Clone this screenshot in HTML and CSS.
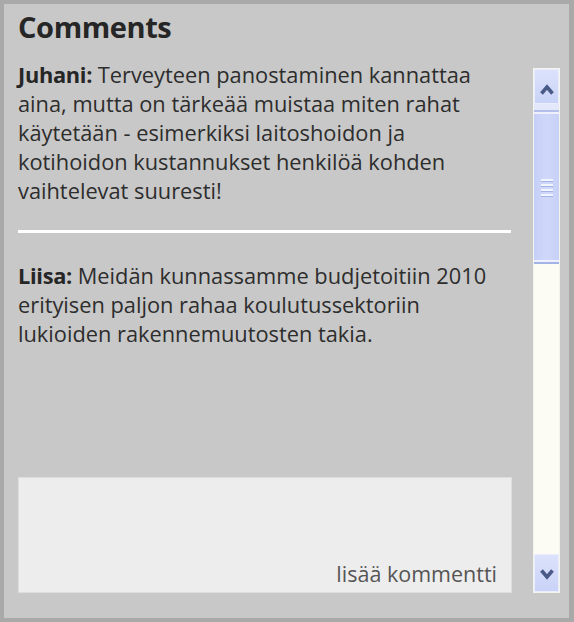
FILE: index.html
```html
<!DOCTYPE html>
<html lang="fi">
<head>
<meta charset="utf-8">
<title>Comments</title>
<link rel="stylesheet" href="styles.css">
</head>
<body>
<div class="frame">
  <h1 class="title">Comments</h1>
  <div class="row">
    <div class="content">
      <p class="comment"><b>Juhani:</b> Terveyteen panostaminen kannattaa<br>aina, mutta on tärkeää muistaa miten rahat<br>käytetään - esimerkiksi laitoshoidon ja<br>kotihoidon kustannukset henkilöä kohden<br>vaihtelevat suuresti!</p>
      <div class="sep"></div>
      <p class="comment"><b>Liisa:</b> Meidän kunnassamme budjetoitiin 2010<br>erityisen paljon rahaa koulutussektoriin<br>lukioiden rakennemuutosten takia.</p>
      <div class="box"><span class="add">lisää kommentti</span></div>
    </div>
    <div class="scrollbar">
      <div class="btn btn-up">
        <svg width="14" height="11" viewBox="0 0 14 11"><polyline points="1.5,9.5 7,3 12.5,9.5" fill="none" stroke="#4a5a86" stroke-width="3.6"/></svg>
      </div>
      <div class="gap"></div>
      <div class="thumb">
        <div class="grip"><i></i><i></i><i></i><i></i></div>
      </div>
      <div class="track"></div>
      <div class="btn btn-down">
        <svg width="14" height="11" viewBox="0 0 14 11"><polyline points="1.5,1.5 7,8 12.5,1.5" fill="none" stroke="#4a5a86" stroke-width="3.6"/></svg>
      </div>
    </div>
  </div>
</div>
</body>
</html>
```
FILE: styles.css
```css
html, body {
  margin: 0;
  padding: 0;
}
body {
  font-family: "Open Sans", "Noto Sans", sans-serif;
  color: #2d2d2d;
}
.frame {
  box-sizing: border-box;
  width: 574px;
  height: 622px;
  background: #c8c8c8;
  border: 4px solid #a9a9a9;
  border-right-width: 5px;
  padding: 5px 9px 25px 14px;
  display: flex;
  flex-direction: column;
}
.title {
  margin: 0 0 15px 0;
  font-size: 29px;
  line-height: 36px;
  font-weight: 700;
  color: #262626;
  letter-spacing: -0.4px;
}
.row {
  flex: 1;
  display: flex;
  gap: 21px;
  min-height: 0;
}
.content {
  width: 494px;
  display: flex;
  flex-direction: column;
}
.comment {
  margin: 0;
  font-size: 21.8px;
  line-height: 29px;
  white-space: nowrap;
}
.comment b {
  font-weight: 700;
  color: #262626;
  letter-spacing: -0.3px;
}
.sep {
  height: 3px;
  width: 493px;
  background: #ffffff;
  margin: 25px 0 28px 0;
}
.box {
  margin-top: auto;
  box-sizing: border-box;
  height: 116px;
  background: #ededed;
  border: 1px solid #dedede;
  padding: 0 14px 4px 14px;
  display: flex;
  align-items: flex-end;
  justify-content: flex-end;
}
.add {
  font-size: 21.5px;
  line-height: 29px;
  color: #555555;
}
.scrollbar {
  width: 27px;
  margin-top: 8px;
  display: flex;
  flex-direction: column;
  background: #fcfcf5;
  box-sizing: border-box;
  border: 1px solid #f4f4ee;
}
.btn {
  display: flex;
  align-items: center;
  justify-content: center;
  box-sizing: border-box;
  background: linear-gradient(#dce2fb, #c9d3f8);
  border: 1px solid #e9edfc;
}
.btn-up {
  height: 35px;
  padding-top: 6px;
}
.btn-down {
  height: 38px;
  padding-top: 2px;
}
.gap {
  height: 6px;
  background: #e3e8fb;
}
.thumb {
  height: 154px;
  box-sizing: border-box;
  background: linear-gradient(90deg, #c5cff7, #d0d8f9 50%, #c7d0f7);
  border-top: 2px solid #b3bfea;
  border-bottom: 2px solid #a3b3e6;
  box-shadow: inset 0 2px 0 #eef1fd, inset 0 -2px 0 #eef1fd;
  display: flex;
  align-items: center;
  justify-content: center;
}
.grip {
  display: flex;
  flex-direction: column;
  gap: 2px;
  margin-top: 2px;
}
.grip i {
  display: block;
  width: 12px;
  height: 2px;
  background: #f3f5fe;
  border-bottom: 1px solid #a3b3e8;
}
.track {
  flex: 1;
  background: #fcfcf5;
}
```
